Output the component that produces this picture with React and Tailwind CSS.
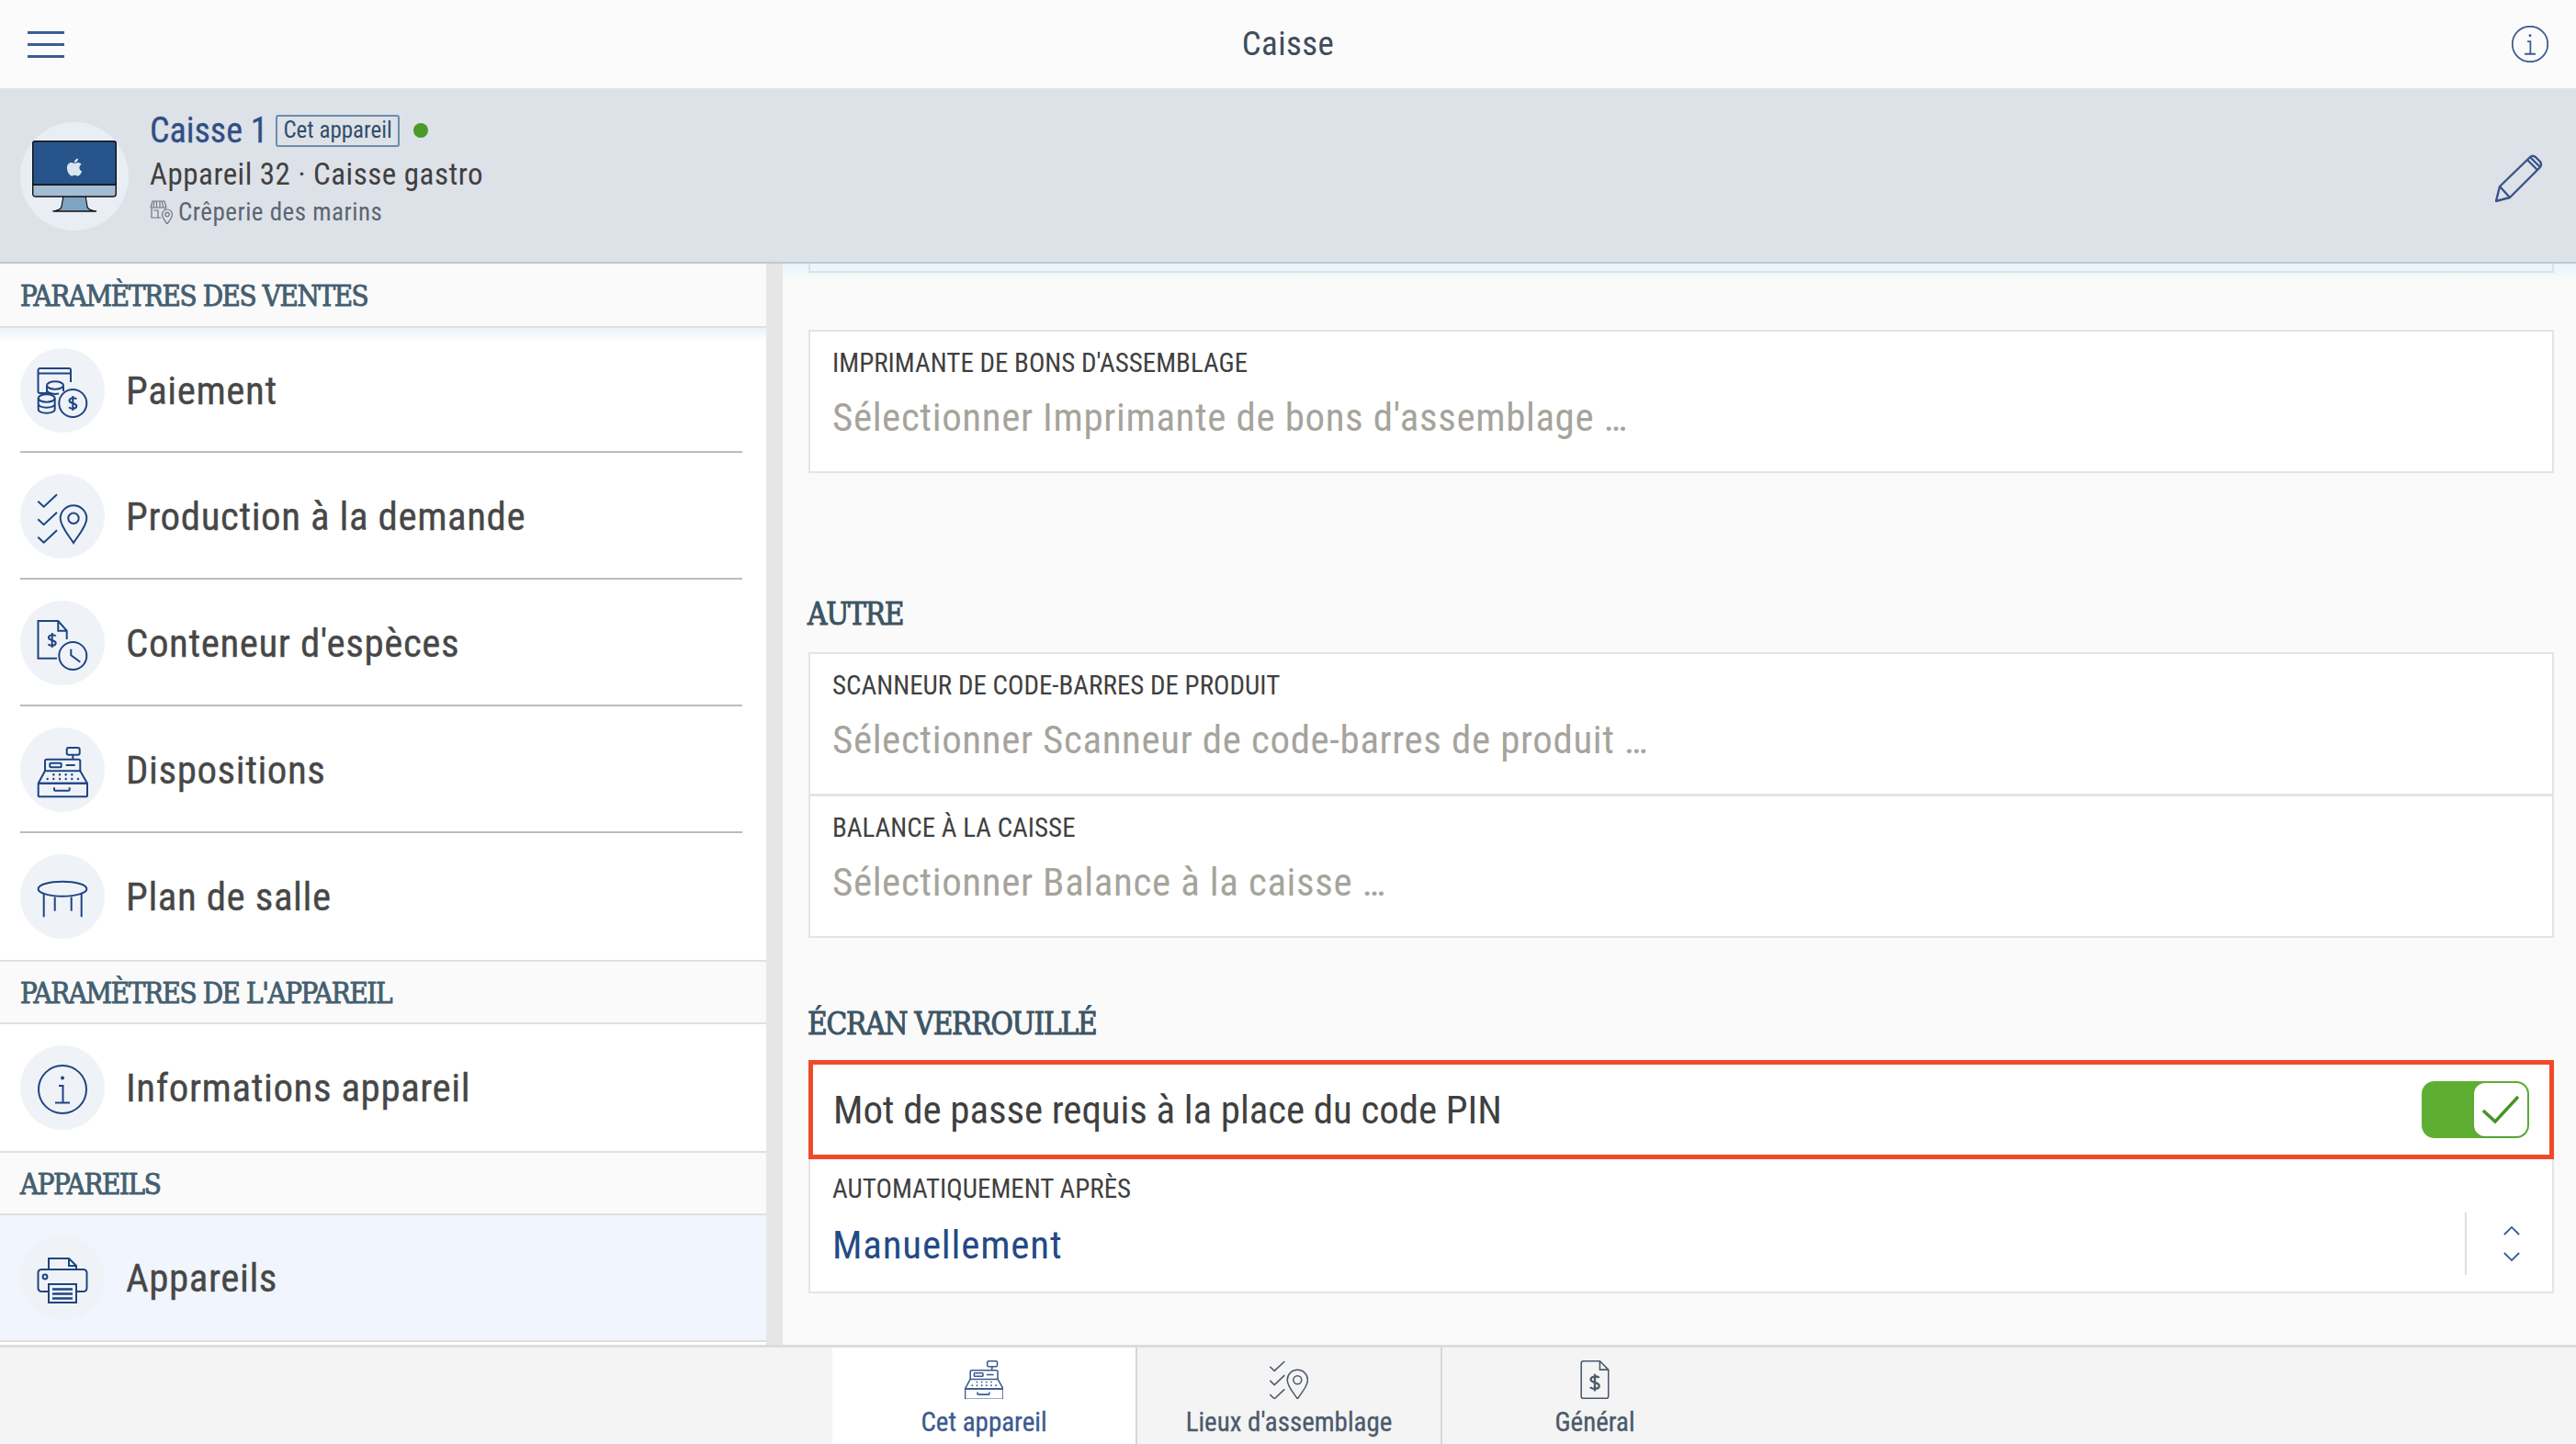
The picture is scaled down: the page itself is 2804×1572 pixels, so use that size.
import React from "react";
import { FaApple } from "react-icons/fa";

const Dollar = ({ x, y, s = 1 }) => (
  <g transform={`translate(${x} ${y}) scale(${s})`}>
    <path d="M4 -4.5C3 -6 -3.5 -6.5 -3.8 -3C-4 1 4.2 -1 4 3.2C3.8 6.5 -3 6.2 -4.2 4.2M0 -8V8" />
  </g>
);

const PaymentIcon = () => (
  <>
    <path d="M14 28H2.5A2 2 0 0 1 .5 26V3A2 2 0 0 1 2.5 1H34A2 2 0 0 1 36 3V16M.5 6.5H36" />
    <ellipse cx="19" cy="19.5" rx="9" ry="4.2" />
    <path d="M10 19.5V31M28 19.5V26M10 25.5C12 28.5 18 29.5 23 28.5" />
    <ellipse cx="9.7" cy="33.5" rx="9" ry="4.2" fill="#eff3f8" />
    <path d="M.7 33.5V45.5C.7 51 18.7 51 18.7 45.5V33.5M.7 39.5C.7 45 18.7 45 18.7 39.5" />
    <circle cx="38.3" cy="39" r="15" fill="#eff3f8" />
    <Dollar x={38.3} y={39} />
  </>
);

const Checks = () => (
  <>
    <path d="M.3 8.7L6.7 14.7L21 1.3" />
    <path d="M.3 28.2L6.7 34.2L21 20.8" />
    <path d="M.3 47.7L6.7 53.7L21 40.3" />
    <path d="M39 54C34 46 24.7 36 24.7 27.5A14.3 14.3 0 0 1 53.3 27.5C53.3 36 44 46 39 54Z" />
    <circle cx="39" cy="27.3" r="5.7" />
  </>
);

const CashIcon = () => (
  <>
    <path d="M21 41.7H.5V1H22.3L31.7 11.7V21M22.3 1V11.7H31.7" />
    <Dollar x={15.7} y={22} />
    <circle cx="38.3" cy="39" r="15" />
    <path d="M36.3 31.7V38.3L46.3 45.7" />
  </>
);

const RegisterIcon = () => (
  <>
    <rect x="31.7" y="1" width="14" height="7.7" rx="2" />
    <path d="M38.3 8.7V13.7" />
    <path d="M8 26.3V15.7A2 2 0 0 1 10 13.7H44.3A2 2 0 0 1 46.3 15.7V26.3" />
    <rect x="13.3" y="17.7" width="12.4" height="4.6" rx="1" />
    <path d="M30.7 20H40.7" />
    <path d="M8 26.3H46.3L54 39.7H.7Z" strokeLinejoin="round" />
    <rect x=".7" y="39.7" width="53.3" height="14.6" rx="1" />
    <path d="M18 44.3V46.5A1.2 1.2 0 0 0 19.2 47.7H33.5A1.2 1.2 0 0 0 34.7 46.5V44.3" />
    <g fill="currentColor" stroke="none">
      {[17.3, 24, 30.7, 37.3].map((x) => <circle key={x} cx={x} cy="30.3" r="1.2" />)}
      {[10.7, 17.3, 24, 30.7, 37.3, 44].map((x) => <circle key={x} cx={x} cy="35" r="1.2" />)}
    </g>
  </>
);

const TableIcon = () => (
  <g transform="translate(0 7)">
    <ellipse cx="27" cy="9.7" rx="26.4" ry="8" />
    <path d="M6.7 15V40.3M47.7 15V40.3M18.7 18.5V33.7M36.7 18.5V33.7" />
  </g>
);

const InfoIcon = () => (
  <>
    <circle cx="27" cy="27" r="26" />
    <path d="M23 23H27.5V41M19 41.5H35" />
    <circle cx="27" cy="14.5" r="2" fill="currentColor" stroke="none" />
  </>
);

const PrinterIcon = () => (
  <g transform="translate(0 3)">
    <path d="M12 13V1H34L42 9V13M34 1V9H42" />
    <path d="M12 37H4A4 4 0 0 1 .5 33V17A4 4 0 0 1 4 13H50A4 4 0 0 1 53.5 17V33A4 4 0 0 1 50 37H42" />
    <circle cx="8" cy="21" r="2.4" />
    <rect x="12" y="29" width="30" height="20" />
    <path d="M16 34.5H38M16 39.5H38M16 44.5H38" strokeWidth="2.4" />
  </g>
);

const BillIcon = () => (
  <>
    <path d="M34 1H11A3 3 0 0 0 8 4V50A3 3 0 0 0 11 53H43A3 3 0 0 0 46 50V13L34 1V13H46" />
    <Dollar x={27} y={31} s={1.5} />
  </>
);

const MenuIcon = ({ icon }) => (
  <div className="w-[92px] h-[92px] shrink-0 rounded-full bg-[#eff3f8] flex items-center justify-center text-[#1f4482]">
    <svg viewBox="0 0 54 54" className="w-[54px] h-[54px] mt-[4px] overflow-visible" fill="none" stroke="currentColor" strokeWidth="2">
      {icon}
    </svg>
  </div>
);

const SectionHeader = ({ children, className = "" }) => (
  <div className={`h-[70px] px-[22px] pt-[3px] flex items-center bg-[#fafafa] border-b-2 border-[#e0e0e0] font-['DejaVu_Serif',serif] font-stretch-condensed text-[31px] tracking-[-1.4px] [-webkit-text-stroke:0.9px_#445f70] text-[#445f70] ${className}`}>
    {children}
  </div>
);

const MenuRow = ({ icon, label, last, active, className = "h-[138px]" }) => (
  <div className={`${className} ${active ? "bg-[#f1f5fd] border-b-2 border-[#dedede]" : ""}`}>
    <div className="h-full ml-[22px] mr-[26px] flex items-center gap-[23px]">
      <MenuIcon icon={icon} />
      <span className="text-[43px] tracking-[0.55px] [-webkit-text-stroke:0.3px_#474747] text-[#474747]">{label}</span>
    </div>
    {!last && <div className="-mt-[2px] ml-[22px] mr-[26px] h-[2px] bg-[#bcbcbc] relative" />}
  </div>
);

const Field = ({ label, placeholder }) => (
  <div className="h-[156px] px-[24px] pt-[17px] bg-white border-2 border-[#e4e4e4]">
    <div className="text-[29px] leading-[34px] text-[#404040] uppercase">{label}</div>
    <div className="mt-[15px] text-[43px] tracking-[0.6px] leading-[54px] text-[#a5a49c]">{placeholder}</div>
  </div>
);

const GroupTitle = ({ children, className = "" }) => (
  <div className={`-ml-[1px] pt-[1px] font-['DejaVu_Serif',serif] font-stretch-condensed text-[33px] leading-[39px] tracking-[-1.2px] [-webkit-text-stroke:1px_#3c5564] text-[#3c5564] ${className}`}>
    {children}
  </div>
);

const Tab = ({ icon, label, active }) => (
  <div className={`w-[332px] h-full flex flex-col items-center pt-[14px] border-r-2 border-[#d6d6d6] last:border-r-0 ${active ? "bg-white text-[#3b5a8f]" : "text-[#4b5a6b]"}`}>
    <svg viewBox="0 0 54 54" className="w-[42px] h-[42px]" fill="none" stroke="currentColor" strokeWidth="2">
      {icon}
    </svg>
    <span className="mt-[8px] text-[29px] leading-[34px] [-webkit-text-stroke:0.3px_currentColor]">{label}</span>
  </div>
);

export default function App() {
  return (
    <div className="w-[2804px] h-[1572px] flex flex-col overflow-hidden bg-[#fafafa] font-['Roboto',sans-serif] font-stretch-condensed">
      {/* Top bar */}
      <header className="h-[98px] shrink-0 px-[30px] flex items-center justify-between bg-[#fbfbfb] border-b-2 border-[#e2e2e2]">
        <div className="w-[40px] flex flex-col gap-[10px]">
          <div className="h-[3px] bg-[#3d5c94]" />
          <div className="h-[3px] bg-[#3d5c94]" />
          <div className="h-[3px] bg-[#3d5c94]" />
        </div>
        <span className="text-[37px] tracking-[0.4px] text-[#404b5a]">Caisse</span>
        <svg viewBox="0 0 54 54" className="w-[40px] h-[40px] text-[#3d5c94]" fill="none" stroke="currentColor" strokeWidth="2.4">
          <InfoIcon />
        </svg>
      </header>

      {/* Device header */}
      <section className="h-[189px] shrink-0 pl-[22px] pr-[36px] flex items-center bg-[#dde1e8] border-b-2 border-[#bfc8d3]">
        <div className="w-[118px] h-[118px] rounded-full bg-[#e9eef5] flex items-center justify-center">
          <svg viewBox="0 0 92 78" className="w-[92px] h-[78px]">
            <path d="M34 60H58L60 72Q61 76 70 77H22Q31 76 32 72Z" fill="#7fa3c3" stroke="#111" strokeWidth="1.2" />
            <path d="M.7 48H91.3V58Q91.3 61 88 61H4Q.7 61 .7 58Z" fill="#a4bdd4" stroke="#111" strokeWidth="1.4" />
            <path d="M.7 3Q.7 .7 3 .7H89Q91.3 .7 91.3 3V48H.7Z" fill="#27548a" stroke="#111" strokeWidth="1.4" />
            <path d="M24 77H70" stroke="#111" strokeWidth="1.2" />
          </svg>
          <FaApple className="absolute w-[20px] h-[22px] mt-[-20px] text-[#dbe5f0]" />
        </div>
        <div className="ml-[23px] flex-1 -mt-[18px]">
          <div className="flex items-center h-[48px]">
            <span className="text-[38px] [-webkit-text-stroke:0.3px_#304e85] text-[#304e85]">Caisse 1</span>
            <span className="ml-[9px] h-[35px] px-[6px] flex items-center text-[25px] text-[#304e69] border-2 border-[#6b8cab] rounded-[3px]">Cet appareil</span>
            <span className="ml-[15px] w-[16px] h-[16px] rounded-full bg-[#4a9a28]" />
          </div>
          <div className="mt-[4px] text-[33px] tracking-[0.5px] leading-[40px] text-[#404040]">Appareil 32 · Caisse gastro</div>
          <div className="mt-[5px] flex items-center gap-[5px] text-[27px] tracking-[0.5px] leading-[32px] text-[#5b6570]">
            <svg viewBox="0 0 26 26" className="w-[26px] h-[26px]" fill="none" stroke="#6d7680" strokeWidth="1.2">
              <path d="M1 8L3 1H16L18 8M1 8H18M4 8L5 1M7.5 8V1M11 8V1M14.5 8L13.5 1M2 8V19H12M4 11H9V19M17 8V11" />
              <path d="M19 26C17 22.5 13.5 19 13.5 15.5A5.5 5.5 0 0 1 24.5 15.5C24.5 19 21 22.5 19 26Z" fill="#dde1e8" />
              <circle cx="19" cy="15.5" r="2.2" />
            </svg>
            Crêperie des marins
          </div>
        </div>
        <svg viewBox="0 0 52 52" className="w-[52px] h-[52px] mt-[4px]" fill="none" stroke="#37558a" strokeWidth="2.4" strokeLinejoin="round">
          <path d="M1 51L5 35L38 3Q41 .5 44 3L49 8Q51 11 49 14L16 47Z" />
          <path d="M5 35L16 47M35 6L46 17" />
          <path d="M38 3L49 14" />
        </svg>
      </section>

      <main className="flex-1 flex min-h-0 relative">
        {/* Left menu */}
        <aside className="w-[834px] shrink-0 bg-white">
          <SectionHeader className="border-[#b9bdc2]">PARAMÈTRES DES VENTES</SectionHeader>
          <div className="bg-gradient-to-b from-[#eaf3fa] to-white to-[16px]">
            <MenuRow icon={<PaymentIcon />} label="Paiement" className="h-[136px]" />
          </div>
          <MenuRow icon={<Checks />} label="Production à la demande" />
          <MenuRow icon={<CashIcon />} label="Conteneur d'espèces" />
          <MenuRow icon={<RegisterIcon />} label="Dispositions" />
          <MenuRow icon={<TableIcon />} label="Plan de salle" last />
          <SectionHeader className="border-t-2">PARAMÈTRES DE L'APPAREIL</SectionHeader>
          <MenuRow icon={<InfoIcon />} label="Informations appareil" last />
          <SectionHeader className="border-t-2">APPAREILS</SectionHeader>
          <MenuRow icon={<PrinterIcon />} label="Appareils" last active />
        </aside>
        <div className="w-[18px] shrink-0 bg-[#e6e6e6]" />

        {/* Right settings */}
        <div className="flex-1 pl-[28px] pr-[24px] bg-gradient-to-b from-[#e6f4fb] to-[#fafafa] to-[18px]">
          <div className="h-[10px] border-x-2 border-b-2 border-[#dbe1e4]" />
          <div className="mt-[62px]">
            <Field label="Imprimante de bons d'assemblage" placeholder="Sélectionner Imprimante de bons d'assemblage …" />
          </div>
          <GroupTitle className="mt-[133px] mb-[22px]">AUTRE</GroupTitle>
          <Field label="Scanneur de code-barres de produit" placeholder="Sélectionner Scanneur de code-barres de produit …" />
          <div className="-mt-[1px]">
            <Field label="Balance à la caisse" placeholder="Sélectionner Balance à la caisse …" />
          </div>
          <GroupTitle className="mt-[73px] mb-[20px]">ÉCRAN VERROUILLÉ</GroupTitle>
          <div className="h-[108px] pl-[22px] pr-[22px] flex items-center justify-between bg-white border-[5px] border-[#f04a2a]">
            <span className="text-[43px] tracking-[-0.1px] text-[#404040]">Mot de passe requis à la place du code PIN</span>
            <div className="w-[117px] h-[62px] p-[2px] rounded-[14px] bg-[#5fae34] flex justify-end">
              <div className="w-[58px] h-[58px] rounded-[12px] bg-white flex items-center justify-center shadow-sm">
                <svg viewBox="0 0 40 32" className="w-[40px] h-[32px]" fill="none" stroke="#459428" strokeWidth="3.4">
                  <path d="M1 17L14 29L39 2" />
                </svg>
              </div>
            </div>
          </div>
          <div className="h-[146px] pl-[24px] pr-[35px] flex bg-white border-x-2 border-b-2 border-[#e4e4e4]">
            <div className="flex-1 pt-[15px]">
              <div className="text-[29px] leading-[34px] text-[#404040] uppercase">Automatiquement après</div>
              <div className="mt-[17px] text-[43px] tracking-[0.8px] leading-[54px] text-[#234a85]">Manuellement</div>
            </div>
            <div className="w-[60px] mt-[58px] h-[68px] border-l-2 border-[#dedede] flex flex-col items-end justify-center gap-[18px]">
              <svg viewBox="0 0 20 12" className="w-[18px] h-[11px]" fill="none" stroke="#2f5b98" strokeWidth="2"><path d="M1 11L10 2L19 11" /></svg>
              <svg viewBox="0 0 20 12" className="w-[18px] h-[11px]" fill="none" stroke="#2f5b98" strokeWidth="2"><path d="M1 1L10 10L19 1" /></svg>
            </div>
          </div>
        </div>
      </main>

      {/* Bottom tabs */}
      <footer className="h-[108px] shrink-0 flex justify-center pl-[4px] bg-[#f4f4f4] border-t-[3px] border-[#dcdcdc]">
        <Tab icon={<RegisterIcon />} label="Cet appareil" active />
        <Tab icon={<Checks />} label="Lieux d'assemblage" />
        <Tab icon={<BillIcon />} label="Général" />
      </footer>
    </div>
  );
}
